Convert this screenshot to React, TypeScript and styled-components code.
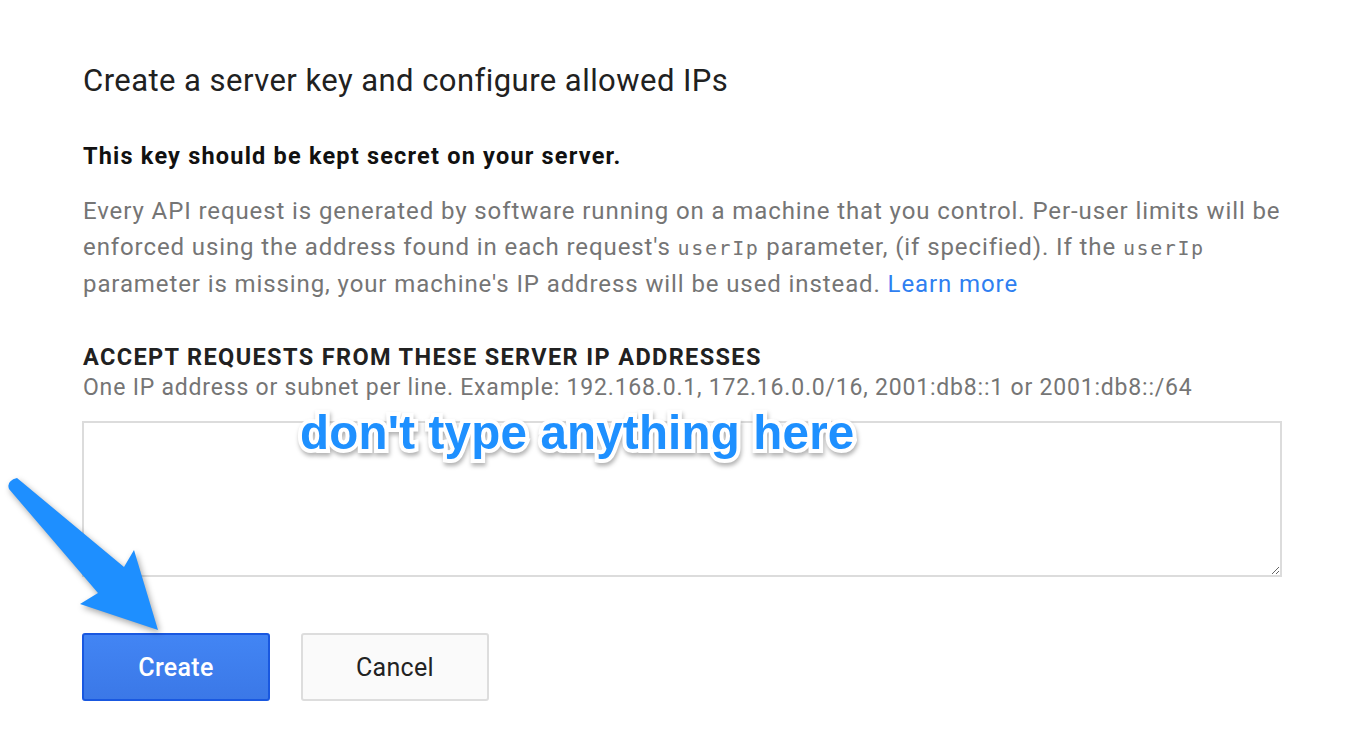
import React from 'react';
import styled, { createGlobalStyle } from 'styled-components';

const GlobalStyle = createGlobalStyle`
    html, body {
        margin: 0;
        padding: 0;
        background: #ffffff;
    }
    body {
        font-family: Roboto, "Noto Sans", sans-serif;
    }
`;

const Page = styled.div`
    position: relative;
    width: 1366px;
    height: 748px;
    box-sizing: border-box;
    padding: 61px 0 0 83px;
    overflow: hidden;
`;

const Title = styled.h1`
    margin: 0;
    font-size: 31px;
    font-weight: 400;
    letter-spacing: 0.45px;
    line-height: 40px;
    color: #212121;
`;

const Warning = styled.p`
    margin: 40px 0 0;
    font-size: 23.5px;
    font-weight: 700;
    letter-spacing: 1.2px;
    line-height: 30px;
    color: #111;
`;

const Paragraph = styled.p`
    margin: 22px 0 0;
    width: 1215px;
    font-size: 24px;
    letter-spacing: 0.9px;
    line-height: 36px;
    color: #757575;
`;

const Code = styled.code`
    font-family: "DejaVu Sans Mono", "Liberation Mono", monospace;
    font-size: 20px;
    letter-spacing: 1.6px;
    color: #757575;
`;

const Link = styled.a`
    color: #2f7ff1;
    text-decoration: none;
`;

const Section = styled.div`
    position: relative;
    margin-top: 40px;
`;

const Label = styled.div`
    font-size: 23.5px;
    font-weight: 700;
    letter-spacing: 1.37px;
    line-height: 30px;
    color: #212121;
`;

const Hint = styled.div`
    font-size: 23px;
    letter-spacing: 0.8px;
    line-height: 32px;
    color: #757575;
`;

const IpInput = styled.textarea`
    display: block;
    margin: 17px 0 0 -1px;
    width: 1200px;
    height: 156px;
    box-sizing: border-box;
    border: 2px solid #dcdcdc;
    border-radius: 0;
    padding: 8px;
    font-family: Roboto, sans-serif;
    font-size: 22px;
    outline: none;
`;

const Actions = styled.div`
    display: flex;
    gap: 31px;
    margin: 56px 0 0 -1px;
`;

const Button = styled.button<{ $primary?: boolean }>`
    width: 188px;
    height: 68px;
    box-sizing: border-box;
    border-radius: 3px;
    font-family: Roboto, sans-serif;
    font-size: 25px;
    letter-spacing: 0.3px;
    font-weight: ${({ $primary }) => ($primary ? 500 : 400)};
    color: ${({ $primary }) => ($primary ? '#ffffff' : '#222222')};
    border: 2px solid ${({ $primary }) => ($primary ? '#1958e0' : '#dddddd')};
    background: ${({ $primary }) => ($primary ? 'linear-gradient(#4285f4, #3b78e7)' : '#fafafa')};
    cursor: pointer;
`;

const Note = styled.div`
    position: absolute;
    left: 217px;
    top: 63px;
    font-family: "Liberation Sans", Arial, sans-serif;
    font-weight: 700;
    font-size: 47.5px;
    letter-spacing: 0.2px;
    color: #1e90ff;
    -webkit-text-stroke: 8px #ffffff;
    paint-order: stroke fill;
    filter: drop-shadow(1px 3px 2px rgba(0, 0, 0, 0.3));
    white-space: nowrap;
    pointer-events: none;
`;

const Arrow = styled.svg`
    position: absolute;
    left: 0;
    top: 0;
    width: 1366px;
    height: 748px;
    pointer-events: none;
    filter: drop-shadow(2px 3px 3px rgba(0, 0, 0, 0.35));
`;

const App: React.FC = () => {
    return (
        <Page>
            <GlobalStyle />
            <Title>Create a server key and configure allowed IPs</Title>
            <Warning>This key should be kept secret on your server.</Warning>
            <Paragraph>
                Every API request is generated by software running on a machine that you control. Per-user limits will be
                enforced using the address found in each request's <Code>userIp</Code> parameter, (if specified). If the{' '}
                <Code>userIp</Code> parameter is missing, your machine's IP address will be used instead.{' '}
                <Link href="#">Learn more</Link>
            </Paragraph>
            <Section>
                <Label>ACCEPT REQUESTS FROM THESE SERVER IP ADDRESSES</Label>
                <Hint>One IP address or subnet per line. Example: 192.168.0.1, 172.16.0.0/16, 2001:db8::1 or 2001:db8::/64</Hint>
                <IpInput />
                <Note>don't type anything here</Note>
            </Section>
            <Actions>
                <Button $primary>Create</Button>
                <Button>Cancel</Button>
            </Actions>
            <Arrow viewBox="0 0 1366 748">
                <path
                    d="M17,478 L124,567 L134,550 L158,630 L80,604 L98,593 L9,489 Q6,481 17,478 Z"
                    fill="#1e8fff"
                />
            </Arrow>
        </Page>
    );
};

export default App;
